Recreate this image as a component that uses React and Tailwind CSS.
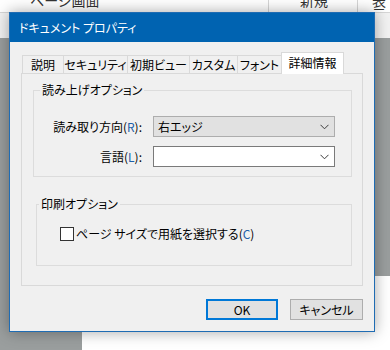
const font = "font-['Noto_Sans_CJK_JP','Noto_Sans',sans-serif] [font-feature-settings:'palt']";

const Chevron = () => (
  <svg width="9" height="6" viewBox="0 0 9 6" className="shrink-0">
    <polyline points="0.5,0.8 4.5,4.8 8.5,0.8" fill="none" stroke="#3c3c3c" strokeWidth="1" />
  </svg>
);

const Select = ({ value, white }) => (
  <div
    className={
      white
        ? "flex h-[21px] items-center justify-between border border-[#7a7a7a] bg-white pl-[4px] pr-[5px]"
        : "flex h-[21px] items-center justify-between border border-[#adadad] bg-[#e1e1e1] pl-[4px] pr-[5px]"
    }
  >
    <span className="text-[12px] leading-none text-black">{value}</span>
    <Chevron />
  </div>
);

const tabs = [
  { label: "説明", w: "w-[41px]" },
  { label: "セキュリティ", w: "w-[64px]" },
  { label: "初期ビュー", w: "w-[62px]" },
  { label: "カスタム", w: "w-[48px]" },
  { label: "フォント", w: "w-[44px]" },
];

const App = () => {
  return (
    <div className={`relative h-[350px] w-[390px] overflow-hidden bg-[#9a9e9e] ${font}`}>
      {/* app behind the dialog */}
      <div className="flex h-[13px] overflow-hidden border-b border-[#d6d6d6] bg-white text-[14px] leading-[14px] text-[#333]">
        <div className="mt-[-7px] w-[268px] pl-[30px]">ページ画面</div>
        <div className="mt-[-7px] w-[89px] border-l border-[#d6d6d6] pl-[31px]">新規</div>
        <div className="mt-[-7px] flex-1 border-l border-[#d6d6d6] pl-[14px]">表示</div>
      </div>
      <div className="h-[25px] bg-[#f2f2f2]" />
      <div className="ml-[82px] mt-[238px] h-[80px] bg-white" />

      {/* dialog window */}
      <div className="absolute left-[9px] top-[12px] flex h-[320px] w-[366px] flex-col border border-[#1f6cb3] bg-[#f0f0f0] shadow-[0_0_14px_rgba(0,0,0,0.35)]">
        <div className="flex h-[29px] items-center bg-[#0063b1] pl-[9px] text-[12px] text-white">
          ドキュメント プロパティ
        </div>

        <div className="px-[11px] pt-[10px]">
          <div className="flex items-end">
            {tabs.map((t, i) => (
              <div
                key={t.label}
                className={`${t.w} ${i === 0 ? "ml-[1px]" : ""} flex h-[18px] items-center justify-center border-l border-t border-[#d9d9d9] text-[12px] leading-none text-black`}
              >
                {t.label}
              </div>
            ))}
            <div className="relative z-10 -mb-px flex h-[22px] w-[63px] items-center justify-center border-x border-t border-[#d9d9d9] bg-white pb-[2px] text-[12px] leading-none text-black">
              詳細情報
            </div>
          </div>

          <div className="h-[213px] border border-[#d9d9d9] bg-[#f0f0f0] pt-[8px]">
            <fieldset className="ml-[11px] mr-[10px] border border-[#dcdcdc] pb-[9px]">
              <legend className="ml-[6px] px-[2px] text-[12px] leading-[16px] text-black">読み上げオプション</legend>
              <div className="mt-[18px] grid grid-cols-[108px_182px] gap-x-[11px] gap-y-[9px]">
                <div className="flex items-center justify-end text-[12px] text-black">
                  読み取り方向(<span className="text-[#1d5fa8]">R</span>):
                </div>
                <Select value="右エッジ" />
                <div className="flex items-center justify-end text-[12px] text-black">
                  言語(<span className="text-[#1d5fa8]">L</span>):
                </div>
                <Select value="" white />
              </div>
            </fieldset>

            <fieldset className="ml-[14px] mr-[10px] mt-[19px] border border-[#dcdcdc] pb-[23px]">
              <legend className="ml-[2px] px-[2px] text-[12px] leading-[16px] text-black">印刷オプション</legend>
              <div className="ml-[23px] mt-[14px] flex items-center gap-[2px]">
                <div className="h-[14px] w-[14px] border border-[#333] bg-white" />
                <span className="text-[12px] leading-[16px] text-black">
                  ページ サイズで用紙を選択する(<span className="text-[#1d5fa8]">C</span>)
                </span>
              </div>
            </fieldset>
          </div>

          <div className="mt-[13px] flex justify-end gap-[12px]">
            <button className="h-[21px] w-[72px] border-2 border-[#0078d7] bg-[#e1e1e1] text-[12px] leading-none text-black">
              OK
            </button>
            <button className="h-[21px] w-[73px] border border-[#adadad] bg-[#e1e1e1] text-[12px] leading-none text-black">
              キャンセル
            </button>
          </div>
        </div>
      </div>
    </div>
  );
};

export default App;
